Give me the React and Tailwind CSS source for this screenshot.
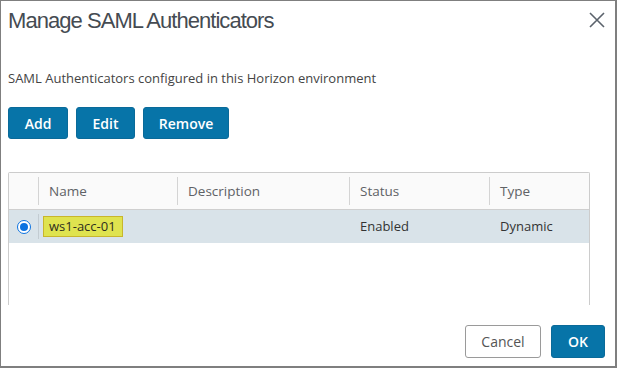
import React from "react";

const columns = [
  { key: "name", label: "Name" },
  { key: "description", label: "Description" },
  { key: "status", label: "Status" },
  { key: "type", label: "Type" },
];

const rows = [
  { id: 1, name: "ws1-acc-01", description: "", status: "Enabled", type: "Dynamic" },
];

function Radio({ checked }) {
  return (
    <div className="w-[14px] h-[14px] rounded-full border-[1.5px] border-[#0b72e0] bg-white flex items-center justify-center">
      {checked && <div className="w-[8px] h-[8px] rounded-full bg-[#0b72e0]"></div>}
    </div>
  );
}

function PrimaryButton({ children, width }) {
  return (
    <button
      className={`h-[32px] ${width} rounded-[3px] bg-[#0774a8] border border-[#0a6a99] text-white text-[14px] font-semibold`}
    >
      {children}
    </button>
  );
}

function App() {
  return (
    <div
      className="w-[617px] h-[368px] bg-white border-l border-t border-r-2 border-b-2 border-[#7f7f7f] flex flex-col"
      style={{ fontFamily: '"Open Sans", "Liberation Sans", sans-serif' }}
    >
      {/* HEADER */}
      <div className="flex items-start justify-between pl-[7px] pr-[10px] pt-[9px]">
        <h1
          className="text-[22px] leading-[22px] tracking-[-0.95px] text-[#454b52]"
          style={{ fontFamily: '"Liberation Sans", Arial, sans-serif' }}
        >
          Manage SAML Authenticators
        </h1>
        <svg className="mt-[2px]" width="16" height="16" viewBox="0 0 16 16">
          <path d="M1 1 L15 15 M15 1 L1 15" stroke="#5b636c" strokeWidth="1.6" fill="none" />
        </svg>
      </div>

      {/* SUBTITLE */}
      <p className="mt-[37px] ml-[7px] text-[13px] leading-[18px] text-[#444]">
        SAML Authenticators configured in this Horizon environment
      </p>

      {/* ACTIONS */}
      <div className="flex gap-[8px] ml-[7px] mt-[20px]">
        <PrimaryButton width="w-[60px]">Add</PrimaryButton>
        <PrimaryButton width="w-[59px]">Edit</PrimaryButton>
        <PrimaryButton width="w-[86px]">Remove</PrimaryButton>
      </div>

      {/* TABLE */}
      <div className="mt-[33px] ml-[7px] w-[582px] h-[133px] border-l border-r border-t border-[#cccccc] rounded-tl-[2px] rounded-tr-[2px]">
        <div className="grid grid-cols-[29px_139px_172px_140px_1fr] h-[37px] bg-[#fafafa] border-b-[1.5px] border-[#cfcfcf]">
          <div></div>
          {columns.map((col) => (
            <div key={col.key} className="flex items-center">
              <div className="w-px h-[28px] bg-[#d4d4d4]"></div>
              <span className="ml-[10px] text-[13.5px] text-[#5f6266]">{col.label}</span>
            </div>
          ))}
        </div>

        {rows.map((row) => (
          <div
            key={row.id}
            className="grid grid-cols-[29px_139px_172px_140px_1fr] h-[33px] bg-[#d9e3e9] text-[13px] text-[#333]"
          >
            <div className="flex items-center justify-center pl-[1px]">
              <Radio checked />
            </div>
            <div className="flex items-center">
              <div className="w-px h-[25px] bg-[#c3ccd2]"></div>
              <span className="ml-[4px] h-[21px] w-[80px] pl-[5px] flex items-center bg-[#dfe34f] border border-[#c8b62c] text-[#2e2e1e]">
                {row.name}
              </span>
            </div>
            <div className="flex items-center pl-[11px]">{row.description}</div>
            <div className="flex items-center pl-[11px]">{row.status}</div>
            <div className="flex items-center pl-[11px]">{row.type}</div>
          </div>
        ))}
      </div>

      {/* FOOTER */}
      <div className="flex justify-end gap-[10px] mt-[20px] pr-[10px]">
        <button className="h-[33px] w-[76px] rounded-[3px] bg-white border border-[#9a9a9a] text-[14px] text-[#555]">
          Cancel
        </button>
        <button className="h-[33px] w-[54px] rounded-[3px] bg-[#0774a8] border border-[#0a6a99] text-white text-[14px] font-semibold">
          OK
        </button>
      </div>
    </div>
  );
}

export default App;
